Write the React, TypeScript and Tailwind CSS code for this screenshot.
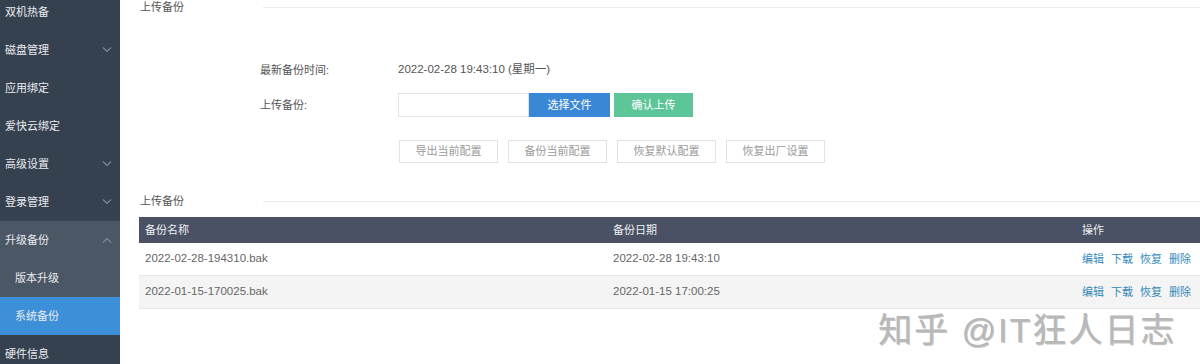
import React from "react";

const font = { fontFamily: '"Liberation Sans", "Noto Sans CJK SC", sans-serif' };

function Chevron({ up }: { up?: boolean }) {
  return (
    <svg width="10" height="6" viewBox="0 0 10 6" className="text-[#7f8a98]">
      {up ? (
        <path d="M1 5.5 L5 1.5 L9 5.5" fill="none" stroke="currentColor" strokeWidth="1.2" />
      ) : (
        <path d="M1 0.5 L5 4.5 L9 0.5" fill="none" stroke="currentColor" strokeWidth="1.2" />
      )}
    </svg>
  );
}

function NavItem({
  label,
  chevron,
  bg,
  sub,
}: {
  label: string;
  chevron?: "up" | "down";
  bg: string;
  sub?: boolean;
}) {
  return (
    <div
      className={`h-[38px] shrink-0 flex items-center justify-between pr-[8px] ${sub ? "pl-[15px]" : "pl-[5px]"} ${bg}`}
    >
      <span className="text-[11px] text-[#e8ebef]">{label}</span>
      {chevron && <Chevron up={chevron === "up"} />}
    </div>
  );
}

function SectionHeader({ title }: { title: string }) {
  return (
    <div className="flex items-center h-[16px]">
      <div className="w-[123px] text-[11px] text-[#555] leading-[16px]">{title}</div>
      <div className="flex-1 border-t border-[#ececec]" />
    </div>
  );
}

const rows = [
  { name: "2022-02-28-194310.bak", date: "2022-02-28 19:43:10", bg: "bg-white" },
  { name: "2022-01-15-170025.bak", date: "2022-01-15 17:00:25", bg: "bg-[#f4f4f4]" },
];

export default function App() {
  return (
    <div className="relative w-[1200px] h-[364px] overflow-hidden flex bg-white" style={font}>
      {/* Sidebar */}
      <div className="w-[120px] shrink-0 bg-[#364150] flex flex-col -mt-[7px]">
        <NavItem label="双机热备" bg="" />
        <NavItem label="磁盘管理" chevron="down" bg="" />
        <NavItem label="应用绑定" bg="" />
        <NavItem label="爱快云绑定" bg="" />
        <NavItem label="高级设置" chevron="down" bg="" />
        <NavItem label="登录管理" chevron="down" bg="" />
        <NavItem label="升级备份" chevron="up" bg="bg-[#4c5766]" />
        <NavItem label="版本升级" bg="bg-[#4c5766]" sub />
        <NavItem label="系统备份" bg="bg-[#3d8fd7]" sub />
        <NavItem label="硬件信息" bg="" />
      </div>

      {/* Main */}
      <div className="flex-1 flex flex-col pl-[19px] -mt-[1px]">
        <div className="pl-[1px]">
          <SectionHeader title="上传备份" />
        </div>

        <div className="pl-[121px] mt-[43px] flex flex-col">
          <div className="flex items-center h-[24px] text-[11px] text-[#555]">
            <div className="w-[138px]">最新备份时间:</div>
            <div className="text-[11.5px]">2022-02-28 19:43:10 (星期一)</div>
          </div>
          <div className="flex items-center h-[24px] mt-[11px] text-[11px] text-[#555]">
            <div className="w-[138px]">上传备份:</div>
            <div className="w-[131px] h-[24px] border border-[#e3e3e3] bg-white" />
            <button className="w-[81px] h-[24px] bg-[#3a87d5] text-white text-[11px]">选择文件</button>
            <button className="w-[79px] h-[24px] ml-[4px] bg-[#5dc699] text-white text-[11px]">确认上传</button>
          </div>
          <div className="flex items-center mt-[23px] pl-[139px] gap-[10px]">
            {["导出当前配置", "备份当前配置", "恢复默认配置", "恢复出厂设置"].map((t) => (
              <button
                key={t}
                className="w-[99px] h-[23px] border border-[#e2e2e2] bg-white text-[11px] text-[#9a9a9a]"
              >
                {t}
              </button>
            ))}
          </div>
        </div>

        <div className="mt-[30px] pl-[1px]">
          <SectionHeader title="上传备份" />
        </div>

        <div className="mt-[8px] flex flex-col">
          <div className="grid grid-cols-[468px_469px_1fr] h-[26px] items-center bg-[#4a5164] text-[11px] text-[#eef0f3]">
            <div className="px-[6px]">备份名称</div>
            <div className="px-[6px]">备份日期</div>
            <div className="px-[6px]">操作</div>
          </div>
          {rows.map((r) => (
            <div
              key={r.name}
              className={`grid grid-cols-[468px_469px_1fr] h-[33px] items-center border-b border-[#e6e6e6] text-[11.5px] text-[#666] ${r.bg}`}
            >
              <div className="px-[6px]">{r.name}</div>
              <div className="px-[6px]">{r.date}</div>
              <div className="pl-[6px] flex gap-[7px] text-[11px] text-[#3589b9] whitespace-nowrap">
                <span className="shrink-0">编辑</span>
                <span className="shrink-0">下载</span>
                <span className="shrink-0">恢复</span>
                <span className="shrink-0">删除</span>
              </div>
            </div>
          ))}
        </div>
      </div>

      {/* Watermark */}
      <div
        className="absolute left-[878px] top-[310px] text-[34px] leading-[40px] tracking-[2px] text-[#b8b8b8] whitespace-nowrap"
        style={{ textShadow: "1px 1px 0 rgba(90,90,90,0.35), -1px -1px 0 rgba(255,255,255,0.9)" }}
      >
        知乎 @IT狂人日志
      </div>
    </div>
  );
}
